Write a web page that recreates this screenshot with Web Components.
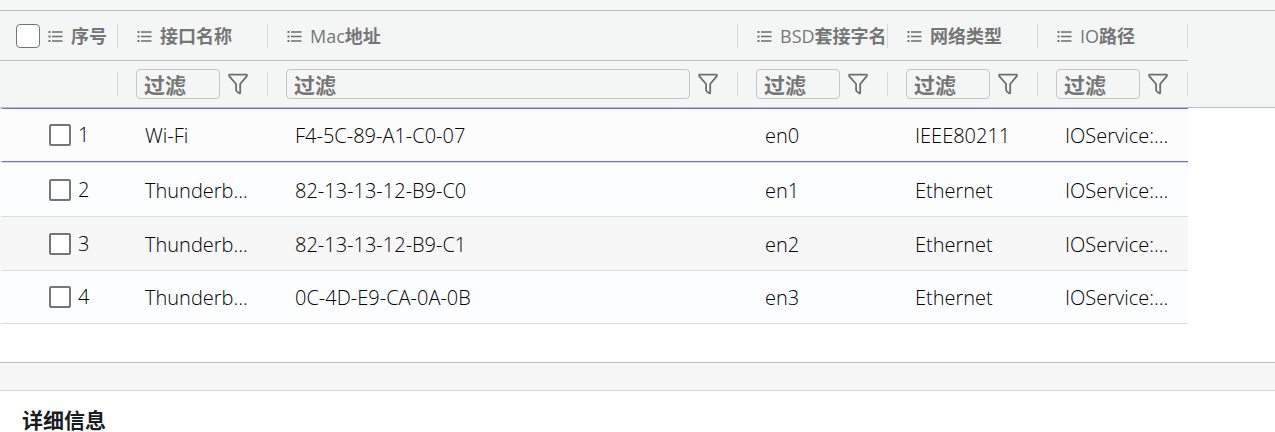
<!DOCTYPE html>
<html lang="zh-CN">
<head>
<meta charset="utf-8">
<title>网络接口</title>
<style>
  body {
    margin: 0;
    background: #fff;
    color: #181d1f;
    font-family: "Open Sans", "Noto Sans CJK SC", sans-serif;
  }
</style>
</head>
<body>

<split-bar size="top"></split-bar>
<network-grid></network-grid>
<split-bar></split-bar>
<detail-panel>详细信息</detail-panel>

<script>
(function () {

  const COLUMNS = [
    { key: "name", label: "接口名称", width: 150 },
    { key: "mac", latin: "Mac", label: "地址" },
    { key: "bsd", latin: "BSD", label: "套接字名", width: 150 },
    { key: "type", label: "网络类型", width: 150 },
    { key: "path", latin: "IO", label: "路径", width: 150 }
  ];

  const ROWS = [
    { name: "Wi-Fi", mac: "F4-5C-89-A1-C0-07", bsd: "en0", type: "IEEE80211", path: "IOService:..." },
    { name: "Thunderb...", mac: "82-13-13-12-B9-C0", bsd: "en1", type: "Ethernet", path: "IOService:..." },
    { name: "Thunderb...", mac: "82-13-13-12-B9-C1", bsd: "en2", type: "Ethernet", path: "IOService:..." },
    { name: "Thunderb...", mac: "0C-4D-E9-CA-0A-0B", bsd: "en3", type: "Ethernet", path: "IOService:..." }
  ];

  // ===== SPLIT BAR =====
  class SplitBar extends HTMLElement {
    constructor() {
      super();
      this.attachShadow({ mode: "open" }).innerHTML = `
        <style>
          :host {
            display: block;
            height: 27px;
            background: #f7f7f7;
            border-top: 1px solid #babfc1;
            border-bottom: 1px solid #d4d6d7;
          }
          :host([size="top"]) {
            height: 10px;
            border-top: 0;
            border-bottom-color: #babfc1;
          }
        </style>
      `;
    }
  }

  // ===== COLUMN LABEL =====
  class ColumnLabel extends HTMLElement {
    constructor() {
      super();
      this.attachShadow({ mode: "open" }).innerHTML = `
        <style>
          :host {
            display: flex;
            align-items: center;
            gap: 8px;
            min-width: 0;
            flex: 1;
            overflow: hidden;
            white-space: nowrap;
            font-weight: 600;
          }
          svg {
            flex: none;
          }
          ::slotted(span) {
            font-weight: 400;
          }
        </style>
        <svg width="16" height="16" viewBox="0 0 16 16" fill="none" stroke="#6b6d6e" stroke-width="1.5" aria-hidden="true">
          <path d="M5 4H15.5M5 8.5H15.5M5 13H15.5"/>
          <path d="M1.5 4h2M1.5 8.5h2M1.5 13h2" stroke-width="2.2"/>
        </svg>
        <span><slot></slot></span>
      `;
    }
  }

  // ===== FILTER BOX =====
  class FilterBox extends HTMLElement {
    connectedCallback() {
      const label = this.getAttribute("label");
      const root = this.shadowRoot || this.attachShadow({ mode: "open" });
      root.innerHTML = `
        <style>
          :host {
            display: flex;
            align-items: center;
            gap: 7px;
            flex: 1;
            min-width: 0;
          }
          input {
            box-sizing: border-box;
            flex: 1;
            min-width: 0;
            height: 30px;
            padding: 2px 7px 0;
            border: 1px solid #c3c7c8;
            border-radius: 4px;
            background: transparent;
            color: #181d1f;
            font: 700 21px/26px "Open Sans", "Noto Sans CJK SC", sans-serif;
          }
          input::placeholder {
            color: #757575;
            opacity: 1;
          }
          button {
            flex: none;
            width: 22px;
            height: 24px;
            padding: 0;
            border: 0;
            background: none;
            cursor: pointer;
          }
          svg {
            display: block;
          }
        </style>
        <input type="text" placeholder="过滤" aria-label="${label}">
        <button type="button" aria-label="${label}">
          <svg width="22" height="24" viewBox="0 0 22 24" fill="none" stroke="#6b6d6e" stroke-width="1.8" stroke-linejoin="round">
            <path d="M2.2 2.6H19.8V4.2L13.2 12V20.4Q13.2 21.6 12 21.1L9.8 19.4Q9.1 18.8 9.1 17.8V12L2.2 4.2Z"/>
          </svg>
        </button>
      `;
    }
  }

  // ===== NETWORK GRID =====
  class NetworkGrid extends HTMLElement {
    constructor() {
      super();
      this.attachShadow({ mode: "open" });
    }

    connectedCallback() {
      this.render();
    }

    render() {
      this.shadowRoot.innerHTML = `
        <style>
          :host {
            display: block;
            padding-bottom: 38px;
          }
          table {
            width: 100%;
            table-layout: fixed;
            border-collapse: separate;
            border-spacing: 0;
          }
          th, td {
            box-sizing: border-box;
            padding: 0;
            text-align: left;
            font-weight: 400;
          }
          thead {
            background: #f4f6f6;
            color: #757677;
            font-size: 18px;
            line-height: 24px;
          }
          .labels th {
            height: 50px;
            border-bottom: 1px solid #babfc1;
          }
          .labels .rest {
            border-bottom-color: transparent;
          }
          .filters th {
            height: 47px;
            border-bottom: 1px solid #babfc1;
          }
          .cell {
            box-sizing: border-box;
            display: flex;
            align-items: center;
            height: 24px;
            padding-left: 18px;
            border-right: 1px solid #d6dadb;
          }
          .filters .cell {
            padding-right: 18px;
          }
          .labels .first {
            gap: 7px;
            padding-left: 16px;
          }
          input {
            appearance: none;
            box-sizing: border-box;
            flex: none;
            margin: 0;
            background: #fff;
          }
          thead input {
            width: 24px;
            height: 24px;
            border: 1px solid #767676;
            border-radius: 4px;
          }
          tbody input {
            width: 22px;
            height: 22px;
            border: 2px solid #767676;
            border-radius: 2px;
          }
          input:checked {
            background: #6b6bf0;
          }
          td {
            height: 54px;
            padding: 2px 16px 0 27px;
            border-top: 1px solid #d9dbdc;
            background: #fcfdff;
            color: #000;
            font-size: 20px;
            font-weight: 350;
            line-height: 28px;
            white-space: nowrap;
            overflow: hidden;
          }
          td:first-child {
            padding: 0 0 0 46px;
            border-left: 3px solid transparent;
          }
          tr:nth-child(odd) td {
            background: #f7f7f7;
          }
          tr.focused td {
            border-top-color: #6b6bf0;
            border-bottom: 1px solid #6b6bf0;
            background: #fcfcfc;
          }
          tr:last-child td {
            border-bottom: 1px solid #d9dbdc;
          }
          tbody tr td.rest {
            padding: 0;
            border-color: transparent;
            background: none;
          }
          label {
            display: flex;
            align-items: center;
            gap: 7px;
          }
        </style>
        <table>
          <colgroup>
            <col style="width: 118px">
            ${COLUMNS.map(c => `<col${c.width ? ` style="width: ${c.width}px"` : ""}>`).join("")}
            <col style="width: 87px">
          </colgroup>
          <thead>
            <tr class="labels">
              <th scope="col">
                <div class="cell first">
                  <input type="checkbox" aria-label="全选">
                  <column-label>序号</column-label>
                </div>
              </th>
              ${COLUMNS.map(c => `
                <th scope="col"><div class="cell"><column-label>${c.latin ? `<span>${c.latin}</span>` : ""}${c.label}</column-label></div></th>
              `).join("")}
              <th class="rest"></th>
            </tr>
            <tr class="filters">
              <th><div class="cell"></div></th>
              ${COLUMNS.map(c => `
                <th><div class="cell"><filter-box label="${c.latin || ""}${c.label}"></filter-box></div></th>
              `).join("")}
              <th></th>
            </tr>
          </thead>
          <tbody>
            ${ROWS.map((row, i) => `
              <tr class="${i === 0 ? "focused" : ""}">
                <td><label><input type="checkbox"><span>${i + 1}</span></label></td>
                ${COLUMNS.map(c => `<td>${row[c.key]}</td>`).join("")}
                <td class="rest"></td>
              </tr>
            `).join("")}
          </tbody>
        </table>
      `;
      this.addFocusEvents();
    }

    addFocusEvents() {
      const rows = this.shadowRoot.querySelectorAll("tbody tr");

      rows.forEach(row => {
        row.addEventListener("click", () => {
          rows.forEach(r => r.classList.toggle("focused", r === row));
        });
      });
    }
  }

  // ===== DETAIL PANEL =====
  class DetailPanel extends HTMLElement {
    constructor() {
      super();
      this.attachShadow({ mode: "open" }).innerHTML = `
        <style>
          :host {
            display: block;
            padding: 19px 22px 0;
          }
          h2 {
            margin: 0;
            font-size: 21px;
            font-weight: 700;
            line-height: 21px;
          }
        </style>
        <h2><slot></slot></h2>
      `;
    }
  }

  customElements.define("split-bar", SplitBar);
  customElements.define("column-label", ColumnLabel);
  customElements.define("filter-box", FilterBox);
  customElements.define("network-grid", NetworkGrid);
  customElements.define("detail-panel", DetailPanel);

})();
</script>
</body>
</html>
